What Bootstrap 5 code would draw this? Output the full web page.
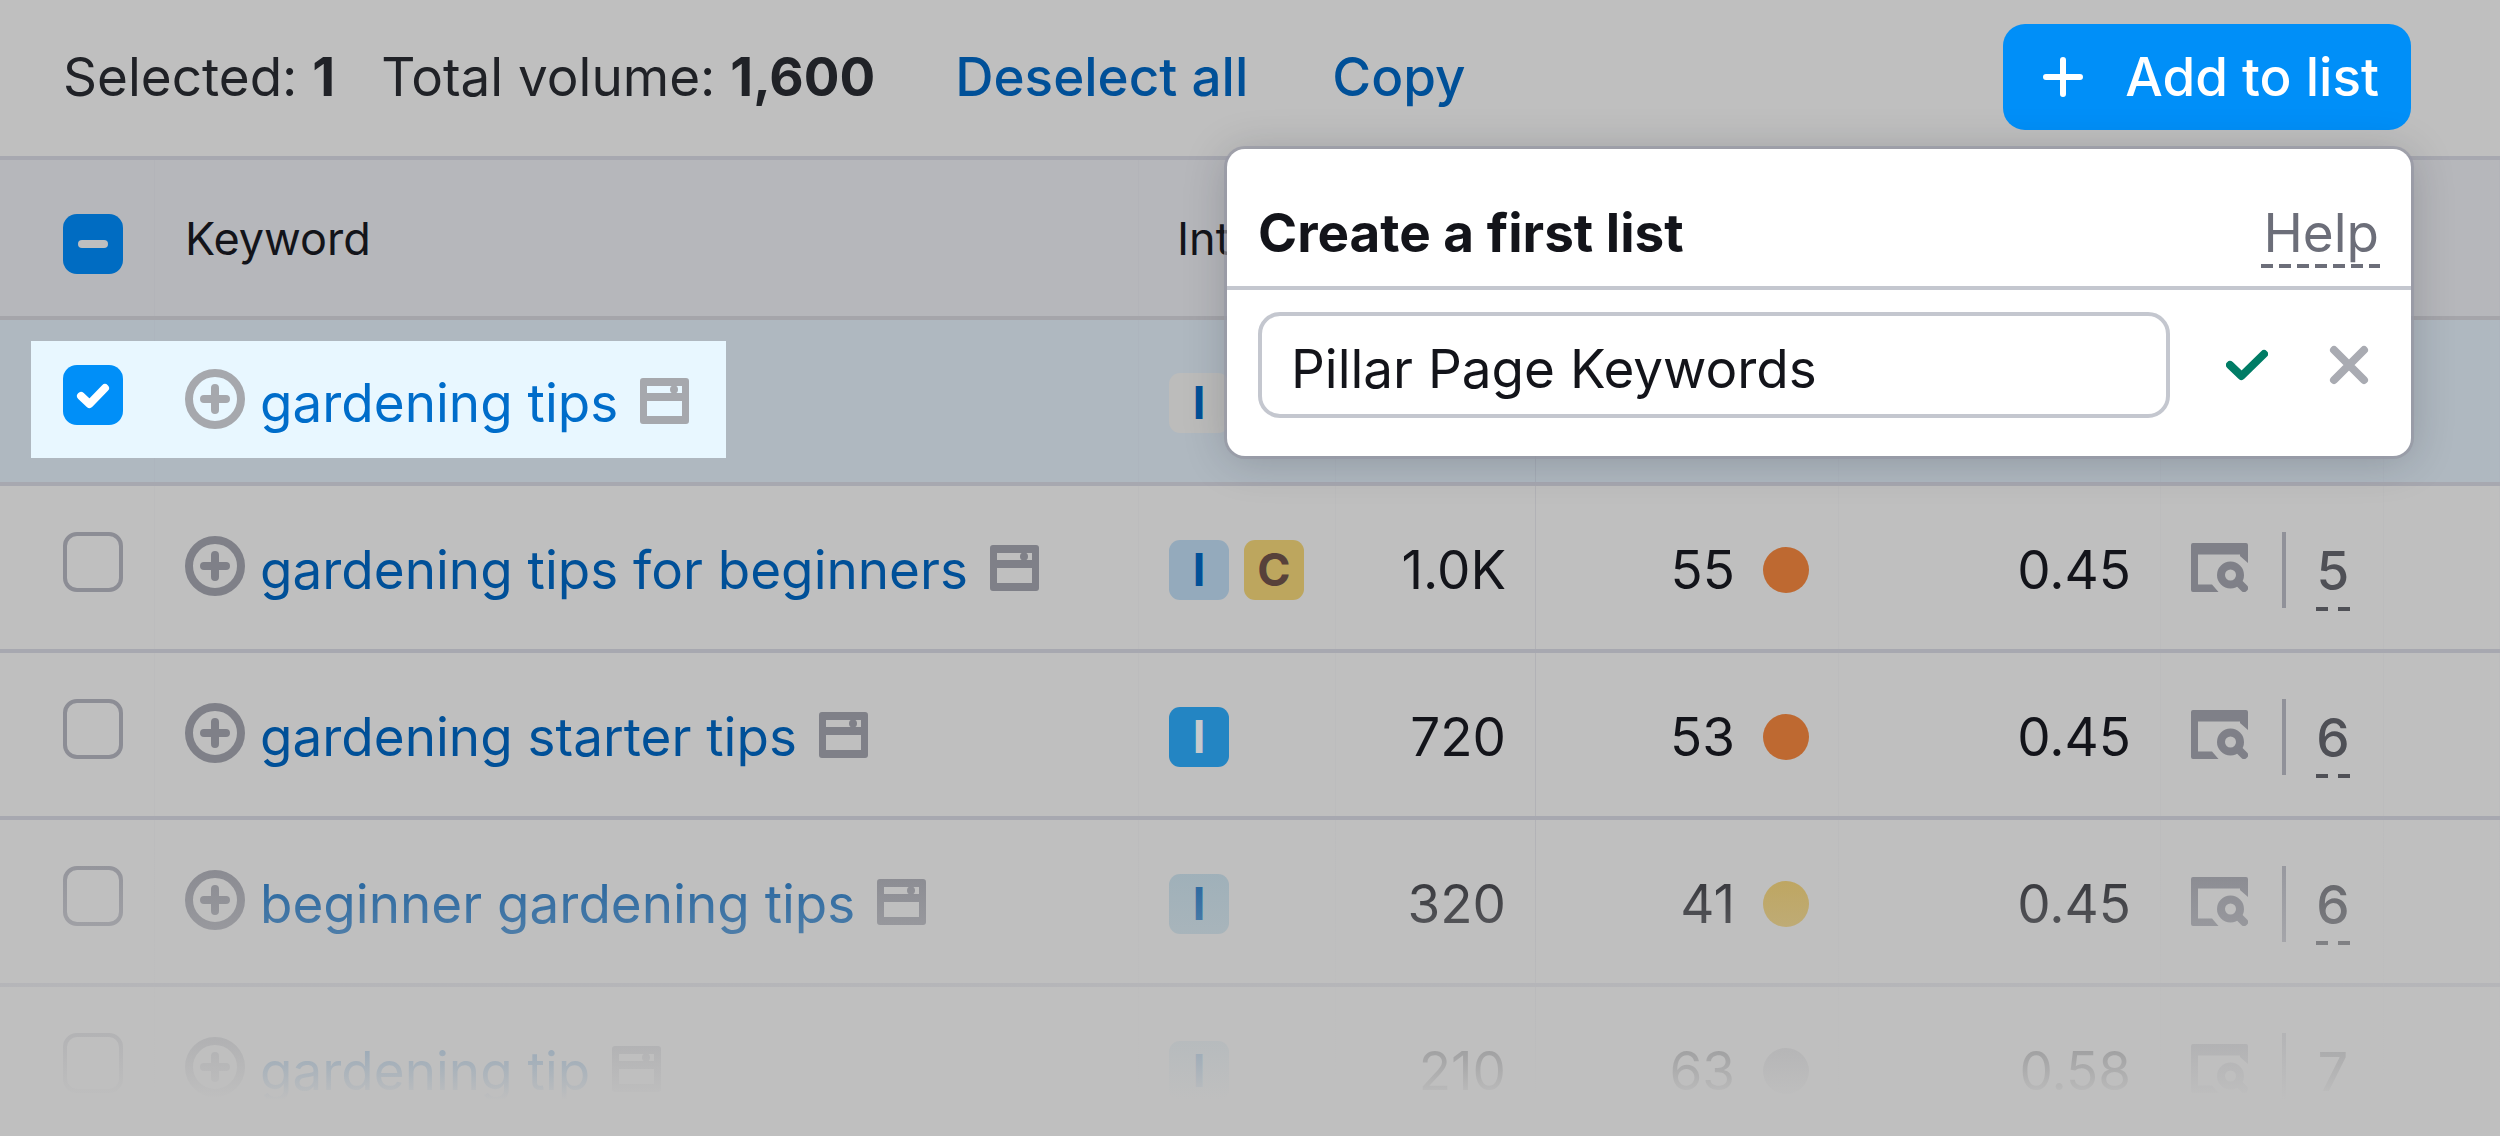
<!DOCTYPE html>
<html lang="en">
<head>
<meta charset="utf-8">
<meta name="viewport" content="width=device-width, initial-scale=1">
<title>Keyword lists</title>
<link href="https://cdn.jsdelivr.net/npm/bootstrap@5.3.0/dist/css/bootstrap.min.css" rel="stylesheet">
<style>
:root{--page:#bfbfbf;--line:#a7a8b0;--ink:#13141a;--link:#005098;--blue:#008ff8;--icon:#7f8088}
body{background:var(--page);color:var(--ink);font-family:Inter,"Liberation Sans",sans-serif;font-size:53px;line-height:60px;overflow:hidden}
a{text-decoration:none;color:var(--link)}
svg{display:block;flex:none}
.toolbar{height:160px;padding:0 89px 2px 63px;border-bottom:4px solid var(--line)}
.stats{color:#202227;gap:46px}
.links{gap:84px;margin-left:80px;font-weight:500}
.btn-add{--bs-btn-color:#fff;--bs-btn-bg:var(--blue);--bs-btn-hover-bg:#0080e0;--bs-btn-hover-color:#fff;height:106px;padding:0 32px 0 40px;gap:42px;border:0;border-radius:22px;font-size:53px;line-height:60px;font-weight:500}
.popup{position:absolute;z-index:3;top:149px;right:89px;width:1184px;max-width:calc(100vw - 176px);height:307px;background:#fff;border-radius:18px;box-shadow:0 0 0 3px rgba(150,151,164,.7),0 4px 44px rgba(25,27,35,.22)}
.popup-head{height:141px;padding:54px 31px 0;border-bottom:4px solid #c4c7cf}
.popup-head h2{font-size:53px;line-height:60px;font-weight:700;margin:0}
.popup-body{padding:22px 42px 0 31px}
.list-name{width:912px;flex:none;height:106px;border:4px solid #c4c7cf;border-radius:22px;padding:8px 29px 0;font-size:53px;color:var(--ink)}
.list-name:focus{color:var(--ink)}
.act{border:0;background:none;padding:0}
.dash{background:repeating-linear-gradient(90deg,currentColor 0 12px,transparent 12px var(--step)) 0 100%/100% 4px no-repeat}
.help{--step:18px;color:#6c6e79;padding:0 1px 5px 2px}
.feat{--step:22px;color:#4f5056;width:34px;padding:12px 0 10px;font-weight:500;text-align:center}
.kw{table-layout:fixed;width:100%;border-collapse:separate;border-spacing:0}
.kw th,.kw td{height:167px;padding:4px 30px 0;border-bottom:4px solid var(--line);vertical-align:middle;box-shadow:inset -1px 0 rgba(130,132,150,.05)}
.kw th{height:160px;padding-top:2px;background:#b6b7bb;font-size:45px;font-weight:400;border-color:#a5a5aa}
.kw .th-intent{padding-left:38px}
.kw .picked td{height:166px;background:#afb8c0}
.kw .vol{box-shadow:inset -1px 0 rgba(130,132,150,.2)}
.kw .box{padding:0 0 12px 63px;position:relative}
.kw th.box{padding:11px 0 0 63px}
.spot{position:absolute;left:31px;top:21px;width:695px;height:117px;background:#e8f7ff}
.front{position:relative;z-index:1}
.form-check-input.tick{display:block;width:60px;height:60px;margin:0;border:4px solid #8c8d95;border-radius:14px;background-color:transparent;background-size:60px 60px;background-position:center;box-shadow:none}
.form-check-input.tick:indeterminate{border:0;background-color:#006cc2;background-image:url("data:image/svg+xml,%3Csvg xmlns='http://www.w3.org/2000/svg' viewBox='0 0 60 60'%3E%3Cpath d='M19 30H41' stroke='%23bfbfbf' stroke-width='8' stroke-linecap='round'/%3E%3C/svg%3E")}
.form-check-input.tick:checked{border:0;background-color:var(--blue);background-image:url("data:image/svg+xml,%3Csvg xmlns='http://www.w3.org/2000/svg' viewBox='0 0 60 60'%3E%3Cpath d='M18 31L26.500 39L42 23' fill='none' stroke='%23fff' stroke-width='8' stroke-linecap='round' stroke-linejoin='round'/%3E%3C/svg%3E")}
.add{margin-bottom:8px}
.add,.page-ico,.serp{color:var(--icon)}
.page-ico{margin:0 0 4px 7px}
.serp{margin-bottom:4px}
.picked .add,.picked .page-ico{color:#a6a8ad}
.picked a{color:#006dca}
.g15{gap:15px}
.tag{width:60px;height:60px;border-radius:11px;font-size:45px;font-weight:700;line-height:60px;text-align:center;background:#94aabc;color:#005098}
.tag-c{background:#bda65e;color:#57413a}
.tag-solid{background:#2385c3;color:#c6c9cc}
.tag-pale{background:#bcbcbb}
.tag-soft{background:#98adb8}
.dot{width:46px;height:46px;border-radius:50%;background:#be6931}
.dot-y{background:#be9f48}
.dot-g{background:#8d8d93}
.bar{width:4px;height:76px;background:#909199;margin:0 30px 0 34px}
.fade-out{position:absolute;z-index:2;left:0;right:0;top:820px;height:316px;pointer-events:none;background:linear-gradient(rgba(191,191,191,0),#bfbfbf 280px)}
</style>
</head>
<body class="position-relative">
<svg width="0" height="0" class="position-absolute" aria-hidden="true">
<symbol id="i-add" viewBox="0 0 60 60"><circle cx="30" cy="30" r="26" fill="none" stroke="currentColor" stroke-width="8"/><path d="M30 19V41M19 30H41" stroke="currentColor" stroke-width="8" stroke-linecap="round"/></symbol>
<symbol id="i-page" viewBox="0 0 49 46"><path fill="currentColor" fill-rule="evenodd" d="M3 0H46Q49 0 49 3V43Q49 46 46 46H3Q0 46 0 43V3Q0 0 3 0ZM7 8V15H42V8ZM7 23V38H42V23Z"/><circle cx="34" cy="11.500" r="4" fill="currentColor"/></symbol>
<symbol id="i-serp" viewBox="0 0 57 49"><path fill="currentColor" d="M2 0H55Q57 0 57 2V20L49 13V11.500H7V41.500H21L27.500 49H2Q0 49 0 47V2Q0 0 2 0Z"/><circle cx="39.500" cy="32" r="9.500" fill="none" stroke="currentColor" stroke-width="8"/><path d="M47 39L53 45" stroke="currentColor" stroke-width="8" stroke-linecap="round"/></symbol>
</svg>

<header class="toolbar d-flex align-items-center">
  <div class="stats d-flex"><span>Selected: <b>1</b></span><span>Total volume: <b>1,600</b></span></div>
  <nav class="links d-flex"><a href="#">Deselect all</a><a href="#">Copy</a></nav>
  <button type="button" class="btn btn-add ms-auto d-flex align-items-center"><svg width="40" height="40" viewBox="0 0 40 40" aria-hidden="true"><path d="M20 3V37M3 20H37" stroke="#fff" stroke-width="6" stroke-linecap="round"/></svg>Add to list</button>
</header>

<section class="popup">
  <div class="popup-head d-flex align-items-start justify-content-between">
    <h2>Create a first list</h2>
    <a href="#" class="help dash">Help</a>
  </div>
  <form class="popup-body d-flex align-items-center">
    <input class="form-control list-name" type="text" value="Pillar Page Keywords" aria-label="List name">
    <div class="d-flex flex-fill justify-content-between align-items-center ms-auto ps-5">
      <button type="button" class="act ms-2" aria-label="Save"><svg width="42" height="32" viewBox="0 0 42 32"><path d="M4 16L15.500 27L38 5" fill="none" stroke="#007c65" stroke-width="8" stroke-linecap="round" stroke-linejoin="round"/></svg></button>
      <button type="button" class="act" aria-label="Cancel"><svg width="40" height="40" viewBox="0 0 40 40"><path d="M5 5L35 35M35 5L5 35" stroke="#a9abb2" stroke-width="8" stroke-linecap="round"/></svg></button>
    </div>
  </form>
</section>

<table class="kw">
<colgroup><col style="width:6.2%"><col style="width:39.36%"><col style="width:7.88%"><col style="width:8%"><col style="width:12.12%"><col style="width:12.88%"><col style="width:8.9%"><col></colgroup>
<thead><tr><th class="box"><input class="form-check-input tick" type="checkbox" id="all" aria-label="Select all"></th><th>Keyword</th><th class="th-intent">Int</th><th></th><th></th><th></th><th></th><th></th></tr></thead>
<tbody>
<tr class="picked">
  <td class="box"><div class="spot"></div><input class="form-check-input tick front" type="checkbox" checked aria-label="gardening tips"></td>
  <td><div class="front d-flex align-items-center g15"><svg class="add" width="60" height="60"><use href="#i-add"/></svg><a href="#">gardening tips</a><svg class="page-ico" width="49" height="46"><use href="#i-page"/></svg></div></td>
  <td><div class="tag tag-pale">I</div></td><td class="vol"></td><td></td><td></td><td></td><td></td>
</tr>
<tr>
  <td class="box"><input class="form-check-input tick" type="checkbox" aria-label="gardening tips for beginners"></td>
  <td><div class="d-flex align-items-center g15"><svg class="add" width="60" height="60"><use href="#i-add"/></svg><a href="#">gardening tips for beginners</a><svg class="page-ico" width="49" height="46"><use href="#i-page"/></svg></div></td>
  <td><div class="d-flex g15"><div class="tag flex-shrink-0">I</div><div class="tag tag-c flex-shrink-0">C</div></div></td>
  <td class="vol text-end">1.0K</td>
  <td><div class="d-flex align-items-center justify-content-end gap-4"><span class="me-1">55</span><span class="dot"></span></div></td>
  <td class="text-end">0.45</td>
  <td><div class="d-flex align-items-center"><svg class="serp" width="57" height="49"><use href="#i-serp"/></svg><span class="bar"></span><a href="#" class="feat dash">5</a></div></td><td></td>
</tr>
<tr>
  <td class="box"><input class="form-check-input tick" type="checkbox" aria-label="gardening starter tips"></td>
  <td><div class="d-flex align-items-center g15"><svg class="add" width="60" height="60"><use href="#i-add"/></svg><a href="#">gardening starter tips</a><svg class="page-ico" width="49" height="46"><use href="#i-page"/></svg></div></td>
  <td><div class="tag tag-solid">I</div></td>
  <td class="vol text-end">720</td>
  <td><div class="d-flex align-items-center justify-content-end gap-4"><span class="me-1">53</span><span class="dot"></span></div></td>
  <td class="text-end">0.45</td>
  <td><div class="d-flex align-items-center"><svg class="serp" width="57" height="49"><use href="#i-serp"/></svg><span class="bar"></span><a href="#" class="feat dash">6</a></div></td><td></td>
</tr>
<tr>
  <td class="box"><input class="form-check-input tick" type="checkbox" aria-label="beginner gardening tips"></td>
  <td><div class="d-flex align-items-center g15"><svg class="add" width="60" height="60"><use href="#i-add"/></svg><a href="#">beginner gardening tips</a><svg class="page-ico" width="49" height="46"><use href="#i-page"/></svg></div></td>
  <td><div class="tag tag-soft">I</div></td>
  <td class="vol text-end">320</td>
  <td><div class="d-flex align-items-center justify-content-end gap-4"><span class="me-1">41</span><span class="dot dot-y"></span></div></td>
  <td class="text-end">0.45</td>
  <td><div class="d-flex align-items-center"><svg class="serp" width="57" height="49"><use href="#i-serp"/></svg><span class="bar"></span><a href="#" class="feat dash">6</a></div></td><td></td>
</tr>
<tr>
  <td class="box"><input class="form-check-input tick" type="checkbox" aria-label="gardening tip"></td>
  <td><div class="d-flex align-items-center g15"><svg class="add" width="60" height="60"><use href="#i-add"/></svg><a href="#">gardening tip</a><svg class="page-ico" width="49" height="46"><use href="#i-page"/></svg></div></td>
  <td><div class="tag tag-soft">I</div></td>
  <td class="vol text-end">210</td>
  <td><div class="d-flex align-items-center justify-content-end gap-4"><span class="me-1">63</span><span class="dot dot-g"></span></div></td>
  <td class="text-end">0.58</td>
  <td><div class="d-flex align-items-center"><svg class="serp" width="57" height="49"><use href="#i-serp"/></svg><span class="bar"></span><a href="#" class="feat dash">7</a></div></td><td></td>
</tr>
</tbody>
</table>
<div class="fade-out"></div>
<script src="https://cdn.jsdelivr.net/npm/bootstrap@5.3.0/dist/js/bootstrap.bundle.min.js"></script>
<script>document.getElementById('all').indeterminate = true;</script>
</body>
</html>
